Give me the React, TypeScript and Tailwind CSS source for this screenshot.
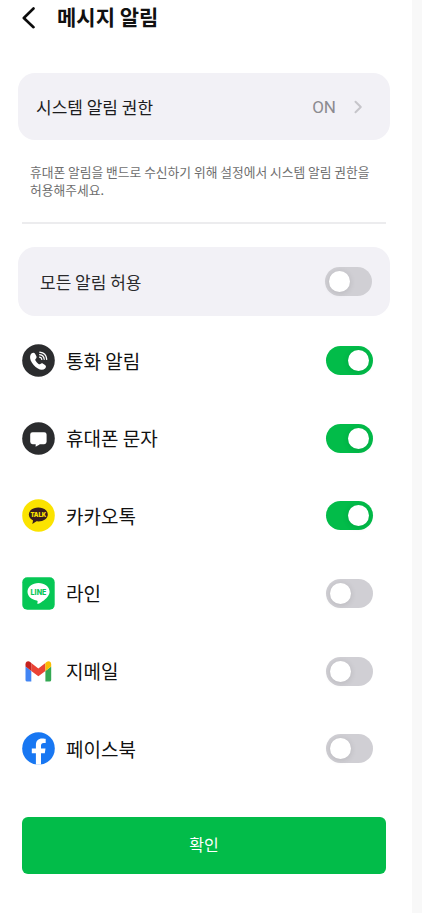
import { useState, type ReactNode } from 'react'

type App = { id: string; label: string; icon: ReactNode; on: boolean }

const PhoneIcon = () => (
  <svg width="33" height="33" viewBox="0 0 33 33" aria-hidden="true">
    <circle cx="16.5" cy="16.5" r="16.3" fill="#2b2c2e" />
    <path d="M9.4 9.6c1.5-1.4 3-1.2 3.8.3l1.1 2.2c.5 1.1.3 2-.5 2.700-.7.6-.7 1.100-.2 1.900.8 1.300 1.700 2.400 2.900 3.200.8.6 1.300.6 1.900 0 .9-.7 1.700-.8 2.700-.2l1.900 1.400c1.300 1 1.300 2.200.1 3.300-1.800 1.700-4.500 1.700-7.200.1-3.200-1.900-5.800-4.900-7.200-8.100-1.100-2.600-.7-5.200.7-6.800z" fill="#fff" />
    <g fill="none" stroke="#fff" strokeWidth="1.3" strokeLinecap="round">
      <path d="M17.800 8.200c3.900.4 6.600 3.100 6.900 7.200" />
      <path d="M17.700 10.700c2.600.3 4.200 2 4.500 4.600" />
      <path d="M17.600 13.200c1.300.2 2 .9 2.200 2.200" />
    </g>
  </svg>
)

const MessageIcon = () => (
  <svg width="33" height="33" viewBox="0 0 33 33" aria-hidden="true">
    <circle cx="16.5" cy="16.5" r="16.3" fill="#2b2c2e" />
    <path d="M10.6 10.2h11.6a2.4 2.4 0 0 1 2.4 2.400v7.200a2.400 2.400 0 0 1-2.400 2.400h-4.400c-1.200 1-2.700 1.900-4.400 2.300.3-.8.4-1.500.3-2.300h-3.100a2.400 2.400 0 0 1-2.400-2.400v-7.200a2.400 2.400 0 0 1 2.400-2.400z" fill="#fff" />
  </svg>
)

const KakaoIcon = () => (
  <svg width="33" height="33" viewBox="0 0 33 33" aria-hidden="true">
    <circle cx="16.5" cy="16.5" r="16.3" fill="#fbe300" />
    <path d="M16.300 8.400c-5.300 0-9.500 3.100-9.500 7.100 0 2.500 1.700 4.700 4.300 6l-.8 3.600 4.200-2.800c.6.100 1.200.1 1.800.1 5.300 0 9.500-3.100 9.500-7s-4.200-7-9.500-7z" fill="#371d1e" />
    <text x="16.3" y="18" textAnchor="middle" textLength="15.8" lengthAdjust="spacingAndGlyphs" fontFamily="Inter, sans-serif" fontWeight="900" fontSize="6.6" fill="#fbe300">TALK</text>
  </svg>
)

const LineIcon = () => (
  <svg width="33" height="33" viewBox="0 0 33 33" aria-hidden="true">
    <rect x=".3" y=".3" width="32.4" height="32.4" rx="5" fill="#06c755" />
    <path d="M16.500 6C10.400 6 5.500 9.900 5.500 14.800c0 4.300 3.800 7.900 9.100 8.600.9.200 1.200.5 1 1.400l-.2 1.300c-.1.800.3 1 .9.700 1.900-.8 6.400-3.700 9.100-6.900 1.500-1.700 2.200-3.300 2.200-5.100C27.600 9.900 22.600 6 16.500 6z" fill="#fff" />
    <text x="16.5" y="17.500" textAnchor="middle" textLength="15.8" lengthAdjust="spacingAndGlyphs" fontFamily="Inter, sans-serif" fontWeight="800" fontSize="7" fill="#06c755">LINE</text>
  </svg>
)

const GmailIcon = () => (
  <svg width="33" height="33" viewBox="0 0 33 33" aria-hidden="true">
    <path d="M3.500 11.500l5.800 4.400v10.700H5.200a1.700 1.700 0 0 1-1.700-1.700z" fill="#4285f4" />
    <path d="M23.400 15.900l5.800-4.400v13.400a1.700 1.700 0 0 1-1.700 1.700h-4.100z" fill="#34a853" />
    <path d="M9.300 8.100l7.050 5.400 7.050-5.400v7.800l-7.050 5.400-7.050-5.400z" fill="#ea4335" />
    <path d="M3.500 11.500V9.300c0-2.800 2.600-4 4.700-2.300l1.100 1.100v7.800z" fill="#c5221f" />
    <path d="M29.200 11.500V9.300c0-2.800-2.600-4-4.700-2.300l-1.100 1.100v7.800z" fill="#fbbc04" />
  </svg>
)

const FacebookIcon = () => (
  <svg width="33" height="33" viewBox="0 0 33 33" aria-hidden="true">
    <circle cx="16.5" cy="16.5" r="16.3" fill="#1877f2" />
    <path d="M13.900 32.600V21.300H9.800v-4.700h4.100V13c0-4.100 2.400-6.400 6.200-6.400 1.800 0 3.600.3 3.600.3v4h-2c-2 0-2.700 1.300-2.700 2.600v3.100h4.500l-.7 4.700H19v11.300a16.300 16.300 0 0 1-5.100 0z" fill="#fff" />
  </svg>
)

const initialApps: App[] = [
  { id: 'call', label: '통화 알림', icon: <PhoneIcon />, on: true },
  { id: 'sms', label: '휴대폰 문자', icon: <MessageIcon />, on: true },
  { id: 'kakao', label: '카카오톡', icon: <KakaoIcon />, on: true },
  { id: 'line', label: '라인', icon: <LineIcon />, on: false },
  { id: 'gmail', label: '지메일', icon: <GmailIcon />, on: false },
  { id: 'facebook', label: '페이스북', icon: <FacebookIcon />, on: false },
]

function Toggle({ on, label, onChange }: { on: boolean; label: string; onChange: () => void }) {
  return (
    <button
      type="button"
      role="switch"
      aria-checked={on}
      aria-label={label}
      onClick={onChange}
      className={`flex h-[29px] w-[47px] shrink-0 items-center rounded-full px-1 ${on ? 'justify-end bg-[#02bc49]' : 'justify-start bg-[#d0cfd4]'}`}
    >
      <span className="size-[21px] rounded-full bg-white shadow-[0_1px_6px_rgba(0,0,0,0.12)]" />
    </button>
  )
}

export default function App() {
  const [apps, setApps] = useState(initialApps)
  const allOn = apps.every((a) => a.on)

  const toggleAll = () => setApps(apps.map((a) => ({ ...a, on: !allOn })))
  const toggleOne = (id: string) => setApps(apps.map((a) => (a.id === id ? { ...a, on: !a.on } : a)))

  return (
    <div className="flex h-[913px] w-[422px] overflow-hidden bg-[#f8f8f8] font-['Noto_Sans_CJK_KR',sans-serif]">
      <main className="flex w-[412px] flex-col bg-white">

        <header className="flex h-[35px] items-center pl-[21px]">
          <button type="button" aria-label="뒤로">
            <svg width="16" height="22" viewBox="0 0 16 22" fill="none" stroke="#0c0c0c" strokeWidth="2.6" strokeLinecap="round" strokeLinejoin="round">
              <path d="M12.500 1.500L2.800 11l9.700 9.200" />
            </svg>
          </button>
          <h1 className="ml-5 pb-[2px] text-[21px] leading-[33px] font-bold text-[#111]">메시지 알림</h1>
        </header>

        {/* System permission */}
        <button type="button" className="mt-[38px] ml-[18px] flex h-[67px] w-[372px] items-center rounded-[17px] bg-[#f2f1f6] pr-[26px] pl-[18px] text-left">
          <span className="flex-1 text-[17px] text-[#1c1c1e]">시스템 알림 권한</span>
          <span className="pt-[3px] font-['Roboto',sans-serif] text-[17px] text-[#8c8b90]">ON</span>
          <svg className="ml-[17px]" width="11" height="14" viewBox="0 0 11 14" fill="none" stroke="#c6c5ca" strokeWidth="2" strokeLinecap="round" strokeLinejoin="round" aria-hidden="true">
            <path d="M2.500 1.800L7.800 7l-5.300 5.200" />
          </svg>
        </button>

        <p className="mt-[23px] ml-[30px] text-[12.75px] leading-[17.5px] whitespace-nowrap text-[#6e6e6e]">
          휴대폰 알림을 밴드로 수신하기 위해 설정에서 시스템 알림 권한을
          <br />
          허용해주세요.
        </p>

        <hr className="mt-6 ml-[22px] w-[364px] border-t-2 border-[#ececee]" />

        <div className="mt-[23px] ml-[18px] flex h-[69px] w-[372px] shrink-0 items-center justify-between rounded-[17px] bg-[#f2f1f6] pr-[18px] pl-[22px]">
          <span className="text-[17px] text-[#2a2a2c]">모든 알림 허용</span>
          <Toggle on={allOn} label="모든 알림 허용" onChange={toggleAll} />
        </div>

        {/* Per-app switches */}
        <ul className="mt-[6px] ml-[22px] w-[351px]">
          {apps.map(({ id, label, icon, on }) => (
            <li key={id} className="flex h-[77.6px] items-center">
              {icon}
              <span className="ml-[11px] flex-1 text-[19px] text-[#111]">{label}</span>
              <Toggle on={on} label={label} onChange={() => toggleOne(id)} />
            </li>
          ))}
        </ul>

        <button type="button" className="mt-[29.4px] ml-[22px] h-[57px] w-[364px] rounded-md bg-[#02bc49] pb-[2px] text-[16px] text-white">
          확인
        </button>
      </main>
    </div>
  )
}
